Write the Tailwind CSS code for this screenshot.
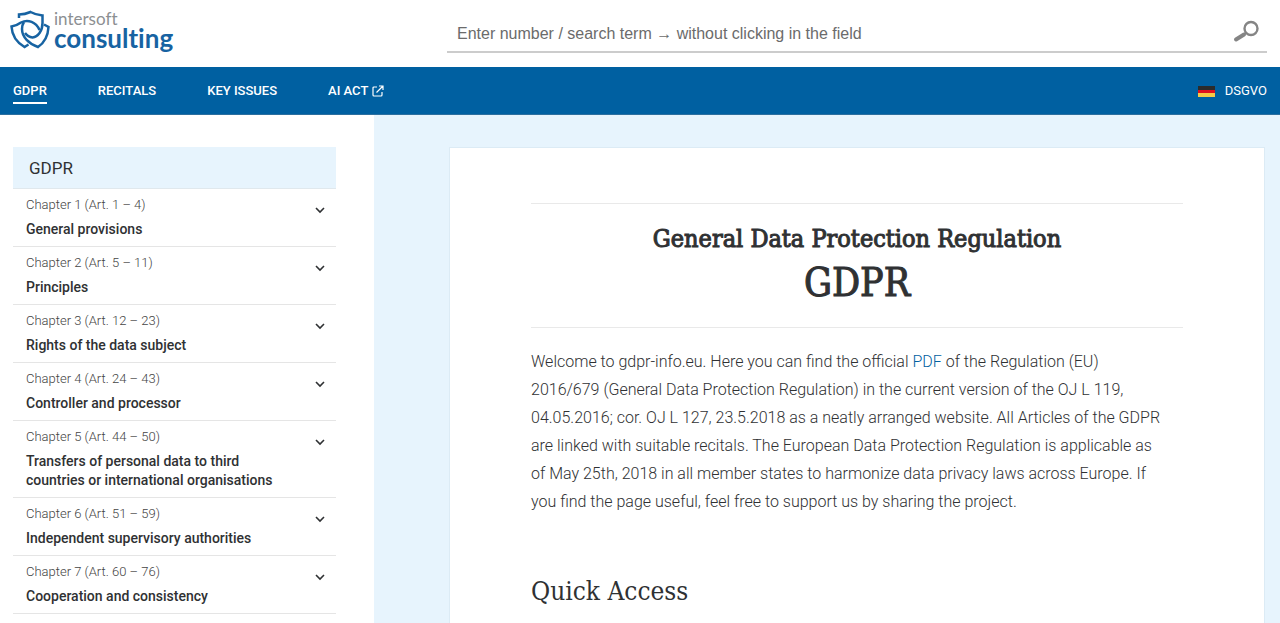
<!DOCTYPE html>
<html lang="en">

<head>
    <meta charset="UTF-8">
    <meta name="viewport" content="width=device-width, initial-scale=1.0">
    <title>General Data Protection Regulation (GDPR)</title>
    <script src="https://cdn.jsdelivr.net/npm/@tailwindcss/browser@4"></script>
</head>

<body class="min-h-screen flex flex-col bg-white text-[#2f3133] font-['Roboto',sans-serif]">
    <header class="flex items-start justify-between h-[67px] pl-2.5 pr-[13px]">
        <a href="#" class="flex pt-2.5" aria-label="intersoft consulting">
            <svg class="w-10 h-10" viewBox="0 0 40 40" fill="none" stroke="#1763a2" stroke-width="2.5">
                <path d="M9 8V4.5Q15 4.5 20.5 2Q26 5 32.5 5.5V13C32.5 21 28 27 22.5 27.5Q18 27 15 23" />
                <path d="M34 14.5L38.5 17C38 26 34 33 28 37C19 34 12 27 12 19Q12 15 14 12" />
                <path d="M18.5 34.5L14.5 37C6 32 2 26 1.5 16.5Q7 15.5 11 12.5C18 9 26 12 29.5 20" />
            </svg>
            <span class="flex flex-col pl-1 font-['Lato',sans-serif] [font-variant-ligatures:none]">
                <span class="text-[17px] leading-[18px] text-[#8c8f92]">intersoft</span>
                <span class="text-[26px] leading-5 font-bold text-[#1763a2]">consulting</span>
            </span>
        </a>
        <form class="flex w-[820px] h-[53px] pt-3 border-b-2 border-[#cccccc]">
            <input type="search" aria-label="Search" placeholder="Enter number / search term → without clicking in the field"
                class="flex-1 pl-2.5 pt-1 text-base font-['Liberation_Sans',sans-serif] placeholder:text-[#6b6b6b] outline-0">
            <button type="button" class="w-10 flex items-start justify-center pt-2" aria-label="Search">
                <svg class="w-7 h-6" viewBox="0 0 28 24" fill="none" stroke="#858585">
                    <circle cx="18" cy="8.5" r="6.5" stroke-width="2.4" />
                    <path d="M13 12.5L10 15" stroke-width="2" />
                    <path d="M11 14.5L3 19.5" stroke-width="4" stroke-linecap="round" />
                </svg>
            </button>
        </form>
    </header>

    <nav class="flex justify-between items-start h-12 px-[13px] pt-3.5 bg-[#0060a1] border-b border-[#2c6f9f] text-[13px] leading-5 text-white">
        <div class="flex gap-[51px] font-medium">
            <a href="#" class="h-[23px] border-b-2 border-white">GDPR</a>
            <a href="#">RECITALS</a>
            <a href="#">KEY ISSUES</a>
            <a href="#" class="flex items-center gap-1 h-5">AI ACT
                <svg class="w-3 h-3" viewBox="0 0 12 12" fill="none" stroke="currentColor" stroke-width="1.2">
                    <path d="M5 2H2Q1 2 1 3V10Q1 11 2 11H9Q10 11 10 10V7M7 1H11V5M11 1L4.5 7.5" />
                </svg>
            </a>
        </div>
        <a href="#" class="flex items-center gap-2.5">
            <svg class="w-[17px] h-[11px]" viewBox="0 0 17 11">
                <path fill="#2b2b2b" d="M0 0H17V4H0z" />
                <path fill="#e0101d" d="M0 4H17V8H0z" />
                <path fill="#f6c946" d="M0 7H17V11H0z" />
            </svg>
            DSGVO
        </a>
    </nav>

    <div class="flex flex-1">
        <aside class="w-[374px] shrink-0 pl-[13px] pr-[38px] pt-8">
            <h2 class="h-[42px] pl-4 text-[17px] leading-[42px] bg-[#e7f4fd] border-b border-[#e0e8ed]">GDPR</h2>
            <ul id="chapters"></ul>
        </aside>

        <main class="flex-1 flex pl-[75px] pr-[15px] pt-8 bg-[#e7f4fd]">
            <article class="flex-1 px-[81px] pt-[55px] bg-white border border-b-0 border-[#dcebf5]">
                <h1 class="flex flex-col h-[125px] pt-[19px] border-y border-[#e9e9e9] text-center font-medium font-['Roboto_Slab','DejaVu_Serif_Condensed','DejaVu_Serif',serif] [-webkit-text-stroke:1px]">
                    <span class="text-[25px] leading-8">General Data Protection Regulation</span>
                    <span class="text-[39px] leading-[56px]">GDPR</span>
                </h1>
                <p class="pt-5 text-base leading-7 font-light">
                    Welcome to gdpr-info.eu. Here you can find the official <a href="#" class="text-[#0060a1]">PDF</a> of the Regulation (EU)<br>
                    2016/679 (General Data Protection Regulation) in the current version of the OJ L 119,<br>
                    04.05.2016; cor. OJ L 127, 23.5.2018 as a neatly arranged website. All Articles of the GDPR<br>
                    are linked with suitable recitals. The European Data Protection Regulation is applicable as<br>
                    of May 25th, 2018 in all member states to harmonize data privacy laws across Europe. If<br>
                    you find the page useful, feel free to support us by sharing the project.
                </p>
                <h2 class="pt-[59px] text-[26px] leading-8 font-['Roboto_Slab','DejaVu_Serif_Condensed','DejaVu_Serif',serif]">Quick Access</h2>
            </article>
        </main>
    </div>

    <script>
        const chapters = [
            ['Chapter 1 (Art. 1 – 4)', 'General provisions'],
            ['Chapter 2 (Art. 5 – 11)', 'Principles'],
            ['Chapter 3 (Art. 12 – 23)', 'Rights of the data subject'],
            ['Chapter 4 (Art. 24 – 43)', 'Controller and processor'],
            ['Chapter 5 (Art. 44 – 50)', 'Transfers of personal data to third countries or international organisations'],
            ['Chapter 6 (Art. 51 – 59)', 'Independent supervisory authorities'],
            ['Chapter 7 (Art. 60 – 76)', 'Cooperation and consistency'],
        ];

        document.getElementById('chapters').innerHTML = chapters.map(([number, title]) => `
            <li class="flex items-start justify-between pl-[13px] pr-2.5 pt-1.5 pb-[7px] border-b border-[#e5e5e5]">
                <a href="#" class="block w-[265px]">
                    <span class="block text-[13px] leading-5 font-light text-[#444444]">${number}</span>
                    <span class="block pt-[5px] text-sm leading-[19px] font-medium">${title}</span>
                </a>
                <button type="button" class="mt-[9px]" aria-label="Expand ${title}">
                    <svg class="w-3 h-3" viewBox="0 0 12 12" fill="none" stroke="#2f3133" stroke-width="1.6">
                        <path d="M2 4L6 8L10 4" />
                    </svg>
                </button>
            </li>`).join('');
    </script>
</body>

</html>
